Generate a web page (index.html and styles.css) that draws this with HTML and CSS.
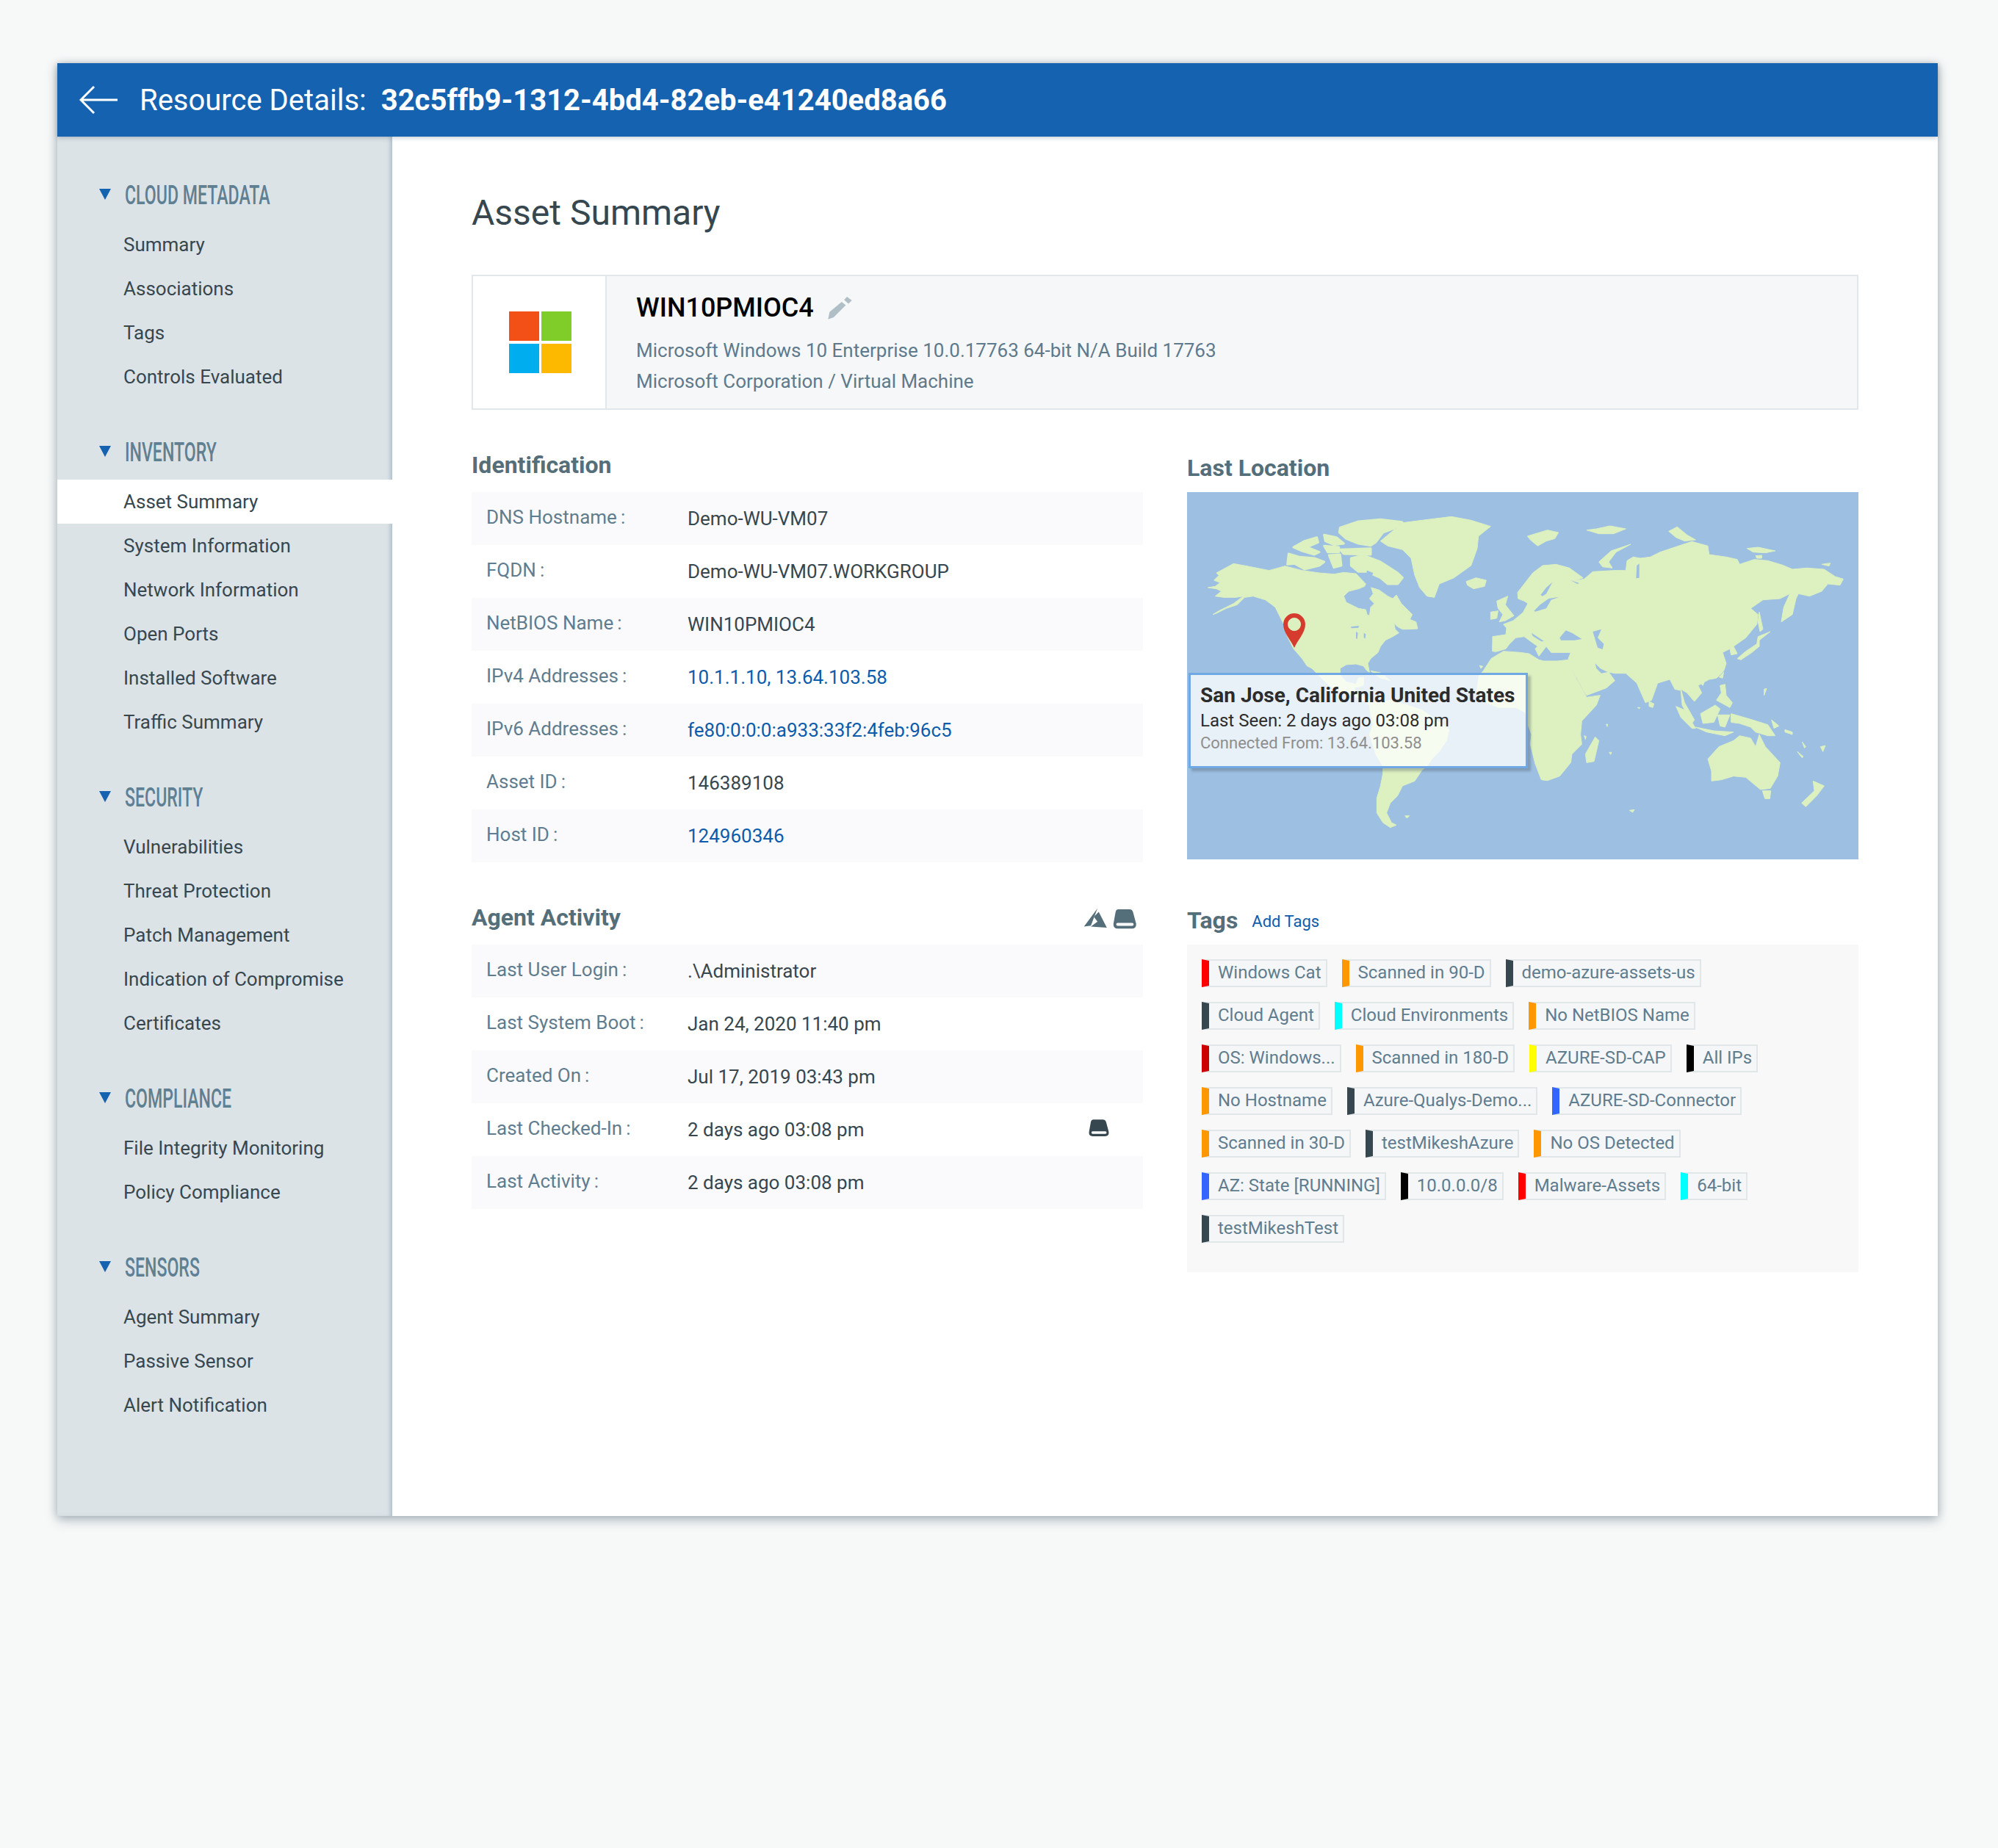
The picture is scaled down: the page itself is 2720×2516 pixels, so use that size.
FILE: index.html
```html
<!DOCTYPE html>
<html lang="en">
<head>
<meta charset="utf-8">
<title>Resource Details</title>
<link rel="stylesheet" href="styles.css">
</head>
<body>
<div class="window">
  <header class="topbar">
    <svg class="back" viewBox="0 0 52 38" aria-hidden="true"><path d="M20 1 L2 19 L20 37 M2 19 H52"/></svg>
    <span class="topbar-label">Resource Details:</span>
    <span class="topbar-id">32c5ffb9-1312-4bd4-82eb-e41240ed8a66</span>
  </header>
  <div class="layout">
    <nav class="sidebar">
      <section class="nav-group">
        <h3 class="nav-head"><i class="caret"></i><span class="nav-title">CLOUD METADATA</span></h3>
        <a class="nav-item">Summary</a><a class="nav-item">Associations</a><a class="nav-item">Tags</a><a class="nav-item">Controls Evaluated</a>
      </section>
      <section class="nav-group">
        <h3 class="nav-head"><i class="caret"></i><span class="nav-title">INVENTORY</span></h3>
        <a class="nav-item active">Asset Summary</a><a class="nav-item">System Information</a><a class="nav-item">Network Information</a><a class="nav-item">Open Ports</a><a class="nav-item">Installed Software</a><a class="nav-item">Traffic Summary</a>
      </section>
      <section class="nav-group">
        <h3 class="nav-head"><i class="caret"></i><span class="nav-title">SECURITY</span></h3>
        <a class="nav-item">Vulnerabilities</a><a class="nav-item">Threat Protection</a><a class="nav-item">Patch Management</a><a class="nav-item">Indication of Compromise</a><a class="nav-item">Certificates</a>
      </section>
      <section class="nav-group">
        <h3 class="nav-head"><i class="caret"></i><span class="nav-title">COMPLIANCE</span></h3>
        <a class="nav-item">File Integrity Monitoring</a><a class="nav-item">Policy Compliance</a>
      </section>
      <section class="nav-group">
        <h3 class="nav-head"><i class="caret"></i><span class="nav-title">SENSORS</span></h3>
        <a class="nav-item">Agent Summary</a><a class="nav-item">Passive Sensor</a><a class="nav-item">Alert Notification</a>
      </section>
    </nav>
    <main class="content">
      <h1 class="page-title">Asset Summary</h1>
      <div class="asset-card">
        <div class="asset-logo">
          <div class="ms-logo"><i class="ms-a"></i><i class="ms-b"></i><i class="ms-c"></i><i class="ms-d"></i></div>
        </div>
        <div class="asset-info">
          <div class="asset-name">
            <span>WIN10PMIOC4</span>
            <svg class="pencil" viewBox="48 34 106 100" aria-hidden="true"><path d="M52 130 L58 100 L108 58 L125 72 L75 122 Z M118 50 L130 37 L150 52 L136 66 Z"/></svg>
          </div>
          <div class="asset-sub">Microsoft Windows 10 Enterprise 10.0.17763 64-bit N/A Build 17763</div>
          <div class="asset-sub">Microsoft Corporation / Virtual Machine</div>
        </div>
      </div>

      <div class="columns">
        <section>
          <h2 class="section-head">Identification</h2>
          <div class="kv">
            <div class="kv-row"><span class="kv-label">DNS Hostname<b class="colon">:</b></span><span class="kv-value">Demo-WU-VM07</span></div>
            <div class="kv-row"><span class="kv-label">FQDN<b class="colon">:</b></span><span class="kv-value">Demo-WU-VM07.WORKGROUP</span></div>
            <div class="kv-row"><span class="kv-label">NetBIOS Name<b class="colon">:</b></span><span class="kv-value">WIN10PMIOC4</span></div>
            <div class="kv-row"><span class="kv-label">IPv4 Addresses<b class="colon">:</b></span><a class="kv-value link">10.1.1.10, 13.64.103.58</a></div>
            <div class="kv-row"><span class="kv-label">IPv6 Addresses<b class="colon">:</b></span><a class="kv-value link">fe80:0:0:0:a933:33f2:4feb:96c5</a></div>
            <div class="kv-row"><span class="kv-label">Asset ID<b class="colon">:</b></span><span class="kv-value">146389108</span></div>
            <div class="kv-row"><span class="kv-label">Host ID<b class="colon">:</b></span><a class="kv-value link">124960346</a></div>
          </div>
        </section>

        <section>
          <h2 class="section-head section-head-low">Last Location</h2>
          <div class="map">
            <svg class="world" viewBox="0 0 2742 1500" aria-hidden="true">
              <g transform="translate(0 30)">
                <g class="land">
                  <path d="M120 300 L190 262 L260 275 L335 290 L400 272 L470 290 L540 300 L600 305 L640 298 L690 303 L730 345 L725 355 L700 365 L660 375 L640 395 L650 420 L700 445 L730 450 L735 470 L745 475 L750 440 L765 425 L745 405 L760 385 L752 360 L785 370 L820 395 L840 405 L855 390 L875 425 L905 455 L920 470 L910 490 L935 500 L942 528 L905 530 L880 530 L860 520 L845 505 L850 530 L865 545 L840 560 L810 575 L790 600 L780 625 L750 650 L738 670 L745 705 L735 700 L720 680 L690 672 L650 675 L625 690 L625 715 L650 745 L690 755 L700 730 L722 725 L720 760 L680 770 L700 790 L745 820 L780 830 L830 820 L900 840 L960 860 L1010 895 L1070 940 L1060 985 L1030 1030 L1000 1060 L980 1090 L960 1105 L930 1150 L880 1170 L860 1210 L830 1240 L815 1280 L835 1320 L855 1330 L830 1340 L800 1320 L775 1280 L775 1220 L790 1170 L800 1120 L800 1090 L770 1040 L745 960 L760 920 L750 880 L745 840 L720 820 L680 800 L630 790 L580 760 L530 710 L510 690 L490 680 L470 650 L435 610 L410 560 L395 510 L375 470 L360 440 L320 410 L270 395 L235 400 L205 430 L160 445 L120 465 L105 470 L130 455 L190 425 L230 395 L200 400 L150 400 L115 395 L140 375 L120 365 L85 360 L115 355 L135 340 L110 330 L130 310 Z"/>
                  <path d="M790 170 L850 120 L880 95 L960 85 L1080 70 L1160 85 L1240 110 L1190 150 L1185 200 L1160 270 L1090 320 L1030 345 L1010 400 L980 395 L950 360 L930 310 L915 240 L880 205 L820 190 Z"/>
                  <path d="M1140 335 L1180 320 L1222 330 L1215 355 L1170 365 L1145 350 Z"/>
                  <path d="M1265 415 L1310 395 L1300 430 L1335 475 L1300 495 L1275 500 L1290 470 L1270 445 Z"/>
                  <path d="M1240 460 L1270 455 L1265 485 L1240 490 Z"/>
                  <path d="M750 700 L790 708 L830 740 L790 730 Z"/>
                  <path d="M890 1292 L908 1292 L898 1302 Z"/>
                  <path d="M1195 678 L1208 682 L1200 690 Z"/>
                </g>
                <g class="land land-fat">
                  <path d="M670 240 L720 228 L790 255 L860 300 L880 320 L860 345 L820 345 L790 320 L735 295 L700 295 L670 270 Z"/>
                  <path d="M625 115 L700 90 L790 82 L878 92 L845 118 L800 135 L770 175 L750 188 L700 180 L650 160 L622 135 Z"/>
                  <path d="M435 195 L480 170 L530 155 L535 175 L490 195 L540 215 L520 225 L470 210 Z"/>
                  <path d="M415 222 L460 235 L520 240 L560 255 L540 270 L480 285 L440 262 L410 265 Z"/>
                  <path d="M560 145 L610 155 L640 180 L600 185 L565 170 Z"/>
                  <path d="M560 190 L620 195 L620 215 L575 215 Z"/>
                  <path d="M625 205 L750 200 L750 225 L640 222 Z"/>
                  <path d="M580 228 L625 225 L630 270 L600 278 Z"/>
                </g>
                <g class="sea">
                  <path d="M668 520 L702 516 L700 524 L672 526 Z"/>
                  <path d="M690 540 L698 545 L695 570 L690 568 Z"/>
                  <path d="M722 545 L730 550 L728 568 L722 565 Z"/>
                  <path d="M735 290 L760 300 L745 345 L725 340 Z"/>
                </g>
              </g>
              <g transform="translate(1272 30)">
                <g class="land">
                  <path d="M-24 560 L30 552 L33 525 L20 510 L60 495 L100 462 L120 425 L105 415 L80 405 L78 380 L105 345 L140 300 L180 270 L235 265 L290 280 L345 320 L300 335 L350 325 L385 295 L470 290 L520 290 L525 250 L550 235 L580 240 L620 235 L660 215 L735 190 L790 172 L855 190 L860 225 L930 235 L975 245 L985 265 L1045 245 L1100 250 L1160 268 L1200 285 L1260 280 L1330 285 L1375 315 L1408 325 L1395 350 L1345 345 L1320 375 L1270 395 L1225 385 L1215 405 L1200 470 L1155 500 L1165 440 L1190 385 L1150 405 L1080 410 L1030 445 L1060 470 L1055 510 L1010 565 L960 600 L975 630 L950 635 L945 610 L915 625 L930 670 L920 700 L890 730 L860 735 L815 760 L830 790 L800 825 L770 790 L745 775 L760 830 L800 900 L790 915 L750 840 L745 780 L720 775 L700 735 L650 750 L625 820 L600 830 L565 750 L520 710 L475 710 L450 705 L475 740 L440 770 L360 800 L350 785 L320 730 L295 690 L285 650 L295 625 L215 625 L195 600 L165 640 L150 610 L160 600 L125 575 L105 560 L70 565 L45 590 L30 610 L-10 622 L-25 620 Z"/>
                  <path d="M-62 700 L-30 650 L20 620 L90 625 L125 630 L165 655 L185 660 L240 660 L285 655 L300 700 L350 790 L360 808 L415 800 L400 840 L340 905 L335 960 L340 1000 L300 1040 L295 1075 L250 1130 L200 1148 L175 1145 L150 1080 L130 1000 L135 960 L120 920 L110 870 L70 850 L0 850 L-50 830 L-90 790 L-80 720 Z"/>
                  <path d="M355 1040 L395 970 L410 985 L390 1070 L360 1075 Z"/>
                  <path d="M855 1060 L900 1010 L960 985 L985 965 L1030 975 L1050 1010 L1065 960 L1090 1010 L1150 1075 L1140 1130 L1110 1180 L1070 1185 L1010 1135 L960 1130 L910 1145 L870 1150 L870 1110 Z"/>
                  <path d="M1078 1190 L1112 1190 L1108 1222 L1088 1222 Z"/>
                  <path d="M1238 1240 L1290 1190 L1285 1150 L1330 1170 L1300 1210 L1255 1255 Z"/>
                  <path d="M975 650 L1010 620 L1055 590 L1060 560 L1110 540 L1065 575 L1065 600 L1035 625 L990 655 Z"/>
                  <path d="M1065 460 L1080 530 L1068 540 L1060 500 Z"/>
                  <path d="M725 845 L760 860 L805 935 L790 935 L745 890 Z"/>
                  <path d="M805 930 L880 945 L960 950 L925 965 L850 950 Z"/>
                  <path d="M825 875 L885 840 L905 855 L880 910 L835 915 Z"/>
                  <path d="M895 880 L945 880 L925 930 L905 925 Z"/>
                  <path d="M905 760 L925 755 L930 800 L955 830 L945 850 L890 820 L910 790 Z"/>
                  <path d="M950 875 L1020 895 L1100 920 L1130 965 L1100 965 L1050 950 L1030 930 L985 915 L950 910 Z"/>
                  <path d="M1115 900 L1145 925 L1125 935 Z"/>
                  <path d="M900 725 L920 705 L915 730 Z"/>
                  <path d="M615 825 L635 835 L630 850 L615 845 Z"/>
                  <path d="M820 745 L840 745 L835 760 Z"/>
                  <path d="M410 255 L460 210 L540 183 L480 215 L450 255 L465 280 L425 275 Z"/>
                  <path d="M1320 265 L1355 260 L1350 272 Z"/>
                  <path d="M1015 200 L1060 195 L1130 210 L1090 218 L1040 215 Z"/>
                  <path d="M1050 230 L1075 228 L1075 240 L1055 240 Z"/>
                  <path d="M695 130 L730 112 L770 145 L805 165 L760 170 L725 155 Z"/>
                  <path d="M118 150 L200 125 L245 135 L230 160 L195 170 L160 190 L130 165 Z"/>
                  <path d="M360 125 L400 120 L455 108 L520 120 L470 140 L410 140 Z"/>
                  <path d="M1170 940 L1200 950 L1200 960 L1170 950 Z"/>
                  <path d="M1220 1030 L1245 1050 L1240 1055 Z"/>
                  <path d="M1315 1010 L1335 1005 L1325 1030 Z"/>
                  <path d="M1240 990 L1255 1010 L1250 1015 Z"/>
                  <path d="M1085 775 L1095 772 L1085 800 Z"/>
                  <path d="M535 1270 L555 1267 L548 1278 Z"/>
                  <path d="M568 850 L578 850 L575 855 Z"/>
                  <path d="M452 1033 L462 1033 L458 1042 Z"/>
                  <path d="M440 918 L446 918 L444 928 Z"/>
                  <path d="M350 965 L358 968 L355 980 Z"/>
                </g>
                <g class="sea">
                  <path d="M250 565 L275 535 L300 545 L340 570 L310 575 L255 575 Z"/>
                  <path d="M385 540 L420 530 L405 565 L430 590 L425 612 L405 605 Z"/>
                  <path d="M145 455 L170 430 L205 405 L248 398 L215 410 L195 445 L150 458 Z"/>
                  <path d="M172 390 L195 360 L220 338 L195 385 L180 395 Z"/>
                  <path d="M395 670 L415 690 L445 705 L420 710 L400 690 Z"/>
                  <path d="M135 545 L185 578 L175 580 L140 558 Z"/>
                  <path d="M295 330 L330 342 L322 345 Z"/>
                  <path d="M565 270 L575 262 L575 320 L562 322 Z"/>
                </g>
              </g>
              <path class="pin" fill-rule="evenodd" d="M438 636 C425 605 393 575 393 540 A45 45 0 0 1 483 540 C483 575 451 605 438 636 Z M438 513 A27 27 0 1 0 438.01 513 Z"/>
            </svg>
            <div class="map-tip">
              <div class="tip-title">San Jose, California United States</div>
              <div class="tip-seen">Last Seen: 2 days ago 03:08 pm</div>
              <div class="tip-from">Connected From: 13.64.103.58</div>
            </div>
          </div>
        </section>

        <section>
          <div class="section-head section-head-icons">
            <h2 class="section-head-text">Agent Activity</h2>
            <svg class="head-icons" viewBox="48 36 218 86" aria-hidden="true">
              <path d="M105 38 L50 112 L78 108 Z M110 52 L143 116 L78 112 L105 92 L90 72 Z"/>
              <path fill-rule="evenodd" d="M190 42 H235 Q247 42 250 55 L262 100 Q264 120 245 120 H187 Q168 120 170 100 L178 55 Q180 42 190 42 Z M187 97 A6 6 0 0 0 187 109 H246 A6 6 0 0 0 246 97 Z"/>
            </svg>
          </div>
          <div class="kv">
            <div class="kv-row"><span class="kv-label">Last User Login<b class="colon">:</b></span><span class="kv-value">.\Administrator</span></div>
            <div class="kv-row"><span class="kv-label">Last System Boot<b class="colon">:</b></span><span class="kv-value">Jan 24, 2020 11:40 pm</span></div>
            <div class="kv-row"><span class="kv-label">Created On<b class="colon">:</b></span><span class="kv-value">Jul 17, 2019 03:43 pm</span></div>
            <div class="kv-row"><span class="kv-label">Last Checked-In<b class="colon">:</b></span><span class="kv-value">2 days ago 03:08 pm</span>
              <svg class="row-disk" viewBox="168 42 96 78" aria-hidden="true"><path fill-rule="evenodd" d="M190 42 H235 Q247 42 250 55 L262 100 Q264 120 245 120 H187 Q168 120 170 100 L178 55 Q180 42 190 42 Z M187 97 A6 6 0 0 0 187 109 H246 A6 6 0 0 0 246 97 Z"/></svg>
            </div>
            <div class="kv-row"><span class="kv-label">Last Activity<b class="colon">:</b></span><span class="kv-value">2 days ago 03:08 pm</span></div>
          </div>
        </section>

        <section>
          <div class="section-head section-head-tags">
            <h2 class="section-head-text">Tags</h2>
            <a class="add-tags">Add Tags</a>
          </div>
          <div class="tags">
            <span class="tag c-red">Windows Cat</span>
            <span class="tag c-orange">Scanned in 90-D</span>
            <span class="tag c-slate">demo-azure-assets-us</span>
            <span class="tag c-slate">Cloud Agent</span>
            <span class="tag c-cyan">Cloud Environments</span>
            <span class="tag c-orange">No NetBIOS Name</span>
            <span class="tag c-darkred">OS: Windows...</span>
            <span class="tag c-orange">Scanned in 180-D</span>
            <span class="tag c-yellow">AZURE-SD-CAP</span>
            <span class="tag c-black">All IPs</span>
            <span class="tag c-orange">No Hostname</span>
            <span class="tag c-slate">Azure-Qualys-Demo...</span>
            <span class="tag c-blue">AZURE-SD-Connector</span>
            <span class="tag c-orange">Scanned in 30-D</span>
            <span class="tag c-slate">testMikeshAzure</span>
            <span class="tag c-orange">No OS Detected</span>
            <span class="tag c-blue">AZ: State [RUNNING]</span>
            <span class="tag c-black">10.0.0.0/8</span>
            <span class="tag c-red">Malware-Assets</span>
            <span class="tag c-cyan">64-bit</span>
            <span class="tag c-slate">testMikeshTest</span>
          </div>
        </section>
      </div>
    </main>
  </div>
</div>
</body>
</html>
```
FILE: styles.css
```css
* { box-sizing: border-box; }
html, body { margin: 0; padding: 0; }
body {
  min-height: 2516px;
  padding: 86px 82px 0 78px;
  background: #f7f8f8;
  font-family: Roboto, "Liberation Sans", sans-serif;
  color: #37474f;
}
.window {
  width: 2560px;
  background: #fff;
  box-shadow: 0 6px 14px rgba(70, 95, 110, .35), -3px 0 10px rgba(70, 95, 110, .12), 3px 0 10px rgba(70, 95, 110, .12);
}
.topbar {
  position: relative;
  z-index: 2;
  display: flex;
  align-items: center;
  height: 100px;
  padding-left: 30px;
  background: #1562b0;
  color: #fff;
  box-shadow: 0 2px 6px rgba(50, 70, 90, .25);
}
.back { width: 52px; height: 38px; margin-right: 30px; fill: none; stroke: #fff; stroke-width: 3; }
.topbar-label { font-size: 40px; font-weight: 400; margin-right: 20px; }
.topbar-id { font-size: 40px; font-weight: 700; }
.layout { display: flex; min-height: 1878px; }
.sidebar {
  flex: 0 0 456px;
  padding-top: 60px;
  background: #dce3e7;
  box-shadow: inset -5px 0 5px -2px rgba(120, 150, 170, .45);
}
.nav-group { margin-bottom: 53px; }
.nav-group:last-child { margin-bottom: 0; }
.nav-head {
  display: flex;
  align-items: center;
  height: 40px;
  margin: 0 0 17px;
  padding-left: 57px;
  font-weight: 400;
}
.caret {
  flex: none;
  width: 0; height: 0;
  margin: -4px 19px 0 0;
  border-left: 8.5px solid transparent;
  border-right: 8.5px solid transparent;
  border-top: 15px solid #1562b0;
}
.nav-title {
  display: inline-block;
  font-size: 36px;
  line-height: 40px;
  font-weight: 500;
  color: #5f7f92;
  white-space: nowrap;
  transform: scaleX(.642);
  transform-origin: left center;
}
.nav-item {
  display: block;
  height: 60px;
  padding-left: 90px;
  font-size: 26px;
  line-height: 60px;
  color: #37474f;
}
.nav-item.active { background: #fff; }
.content { flex: 1; padding: 74px 108px 0 108px; }
.page-title { margin: 0 0 54px; font-size: 48px; line-height: 60px; font-weight: 400; color: #37474f; }
.asset-card {
  display: flex;
  height: 184px;
  border: 2px solid #e1e7ea;
  background: #f5f7f9;
}
.asset-logo {
  flex: 0 0 182px;
  display: flex;
  align-items: center;
  justify-content: center;
  padding-left: 3px;
  background: #fff;
  border-right: 2px solid #e1e7ea;
}
.ms-logo { display: grid; grid-template-columns: 41px 41px; grid-template-rows: 40px 40px; gap: 4px 3px; }
.ms-a { background: #f35018; }
.ms-b { background: #80cc28; }
.ms-c { background: #00adef; }
.ms-d { background: #fdb900; }
.asset-info { padding: 21px 0 0 40px; }
.asset-name { display: flex; align-items: center; height: 44px; margin-bottom: 15px; font-size: 36px; font-weight: 500; color: #000; }
.pencil { width: 35px; height: 33px; margin-left: 18px; fill: #b0bec5; }
.asset-sub { font-size: 26px; line-height: 42px; color: #5e7a8c; }
.columns {
  display: grid;
  grid-template-columns: 914px 914px;
  column-gap: 60px;
  row-gap: 55px;
  margin-top: 55px;
  align-items: start;
}
.section-head { height: 40px; margin: 0 0 17px; font-size: 32px; line-height: 40px; font-weight: 700; color: #546e7a; }
.section-head-low { padding-top: 4px; height: 44px; margin-bottom: 13px; }
.section-head-icons { display: flex; align-items: center; justify-content: space-between; padding-right: 8px; }
.section-head-tags { display: flex; align-items: center; padding-top: 4px; height: 44px; margin-bottom: 13px; }
.section-head-text { margin: 0; font: inherit; }
.head-icons { width: 73px; height: 29px; margin-top: 3px; fill: #546e7a; }
.add-tags { margin-left: 19px; padding-top: 3px; font-size: 22px; font-weight: 400; color: #0d5cab; }
.kv-row {
  display: flex;
  align-items: center;
  height: 72px;
  padding: 0 0 1px 20px;
  font-size: 26px;
}
.kv-row:nth-child(odd) { background: #fafafc; }
.kv-label { flex: 0 0 274px; padding-bottom: 4px; color: #5f7d8f; }
.colon { font-weight: 400; margin-left: 5px; }
.kv-value { color: #37474f; }
.kv-value.link { color: #0d5cab; }
.row-disk { width: 28px; height: 23px; margin: 0 46px 4px auto; fill: #37474f; }
.map { position: relative; height: 500px; background: #9dbfe2; }
.world { display: block; width: 914px; height: 500px; }
.land { fill: #dcf0c0; stroke: #dcf0c0; stroke-width: 3; stroke-linejoin: round; }
.land-fat { stroke-width: 9; }
.sea { fill: #9dbfe2; }
.pin { fill: #d63c2e; }
.map-tip {
  position: absolute;
  left: 2px; top: 246px;
  width: 462px; height: 130px;
  padding: 11px 13px;
  border: 3px solid #6fa8e3;
  background: rgba(255, 255, 255, .77);
  box-shadow: 4px 4px 3px rgba(60, 70, 80, .3);
}
.tip-title { font-size: 28px; line-height: 34px; font-weight: 700; color: #2c2c2c; }
.tip-seen { font-size: 24px; line-height: 34px; color: #2c2c2c; }
.tip-from { font-size: 22px; line-height: 28px; color: #8e8e8e; }
.tags {
  display: flex;
  flex-wrap: wrap;
  align-content: flex-start;
  gap: 20px;
  height: 446px;
  padding: 20px 60px 0 20px;
  background: #f8f8f8;
}
.tag {
  height: 38px;
  padding: 0 6px 0 12px;
  border: 2px solid #e1e6e9;
  border-left: 10px solid #37474f;
  background: #f5f6f7;
  font-size: 24px;
  line-height: 33px;
  color: #5f7d8f;
  white-space: nowrap;
}
.c-red { border-left-color: #ff0000; }
.c-orange { border-left-color: #ff9800; }
.c-slate { border-left-color: #37474f; }
.c-cyan { border-left-color: #00ffff; }
.c-darkred { border-left-color: #cc0000; }
.c-yellow { border-left-color: #ffff00; }
.c-black { border-left-color: #000000; }
.c-blue { border-left-color: #3366ff; }
```
